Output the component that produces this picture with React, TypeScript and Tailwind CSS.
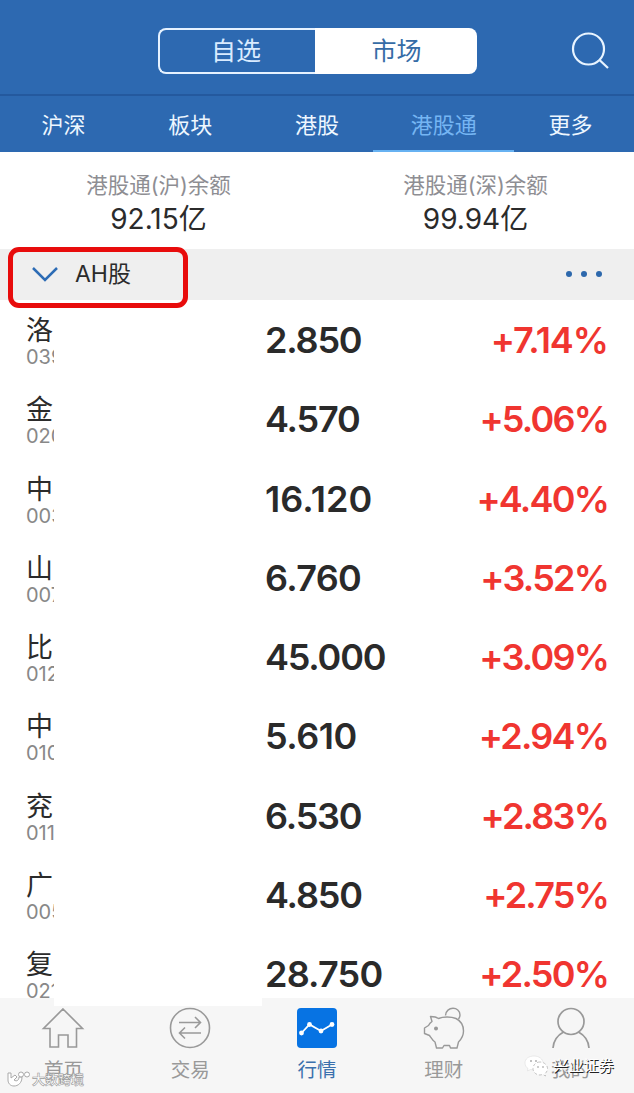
import React from 'react';
import { clsx } from 'clsx';

interface Stock {
  name: string;
  code: string;
  price: string;
  change: string;
  priceClass?: string;
  changeClass?: string;
}

const stocks: Stock[] = [
  { name: '洛', code: '039', price: '2.850', change: '+7.14%', changeClass: 'tracking-[-1px]' },
  { name: '金', code: '020', price: '4.570', change: '+5.06%' },
  { name: '中', code: '003', price: '16.120', change: '+4.40%', priceClass: 'tracking-[0.1px]' },
  { name: '山', code: '007', price: '6.760', change: '+3.52%', priceClass: 'tracking-[-0.7px]' },
  { name: '比', code: '012', price: '45.000', change: '+3.09%' },
  { name: '中', code: '010', price: '5.610', change: '+2.94%', priceClass: 'tracking-[-0.5px]' },
  { name: '兖', code: '011', price: '6.530', change: '+2.83%' },
  { name: '广', code: '005', price: '4.850', change: '+2.75%' },
  { name: '复', code: '021', price: '28.750', change: '+2.50%', priceClass: 'tracking-[-0.8px]' },
];

const tabs = ['沪深', '板块', '港股', '港股通', '更多'];

const balances = [
  { label: '港股通(沪)余额', value: '92.15亿' },
  { label: '港股通(深)余额', value: '99.94亿' },
];

const HomeIcon = () => (
  <svg className="h-11 w-11" viewBox="0 0 44 44" fill="none" stroke="#999" strokeWidth="1.6">
    <path d="M22 3 L41.500 22.500 H35.500 V41 H27 V29 H17.500 V41 H9 V22.500 H2.500 Z" />
  </svg>
);

const TradeIcon = () => (
  <svg className="h-11 w-11" viewBox="0 0 44 44" fill="none" stroke="#999" strokeWidth="1.6">
    <circle cx="22" cy="22" r="19.500" />
    <path d="M11 16.500 H32.500 M27 11 L32.500 16.500 L27 22 M33 27 H11.500 M17 21.500 L11.500 27 L17 32.500" />
  </svg>
);

const MarketIcon = () => (
  <svg className="h-11 w-11" viewBox="0 0 44 44" fill="none">
    <rect x="2" y="2" width="40" height="40" rx="4" fill="#0773e3" />
    <path d="M6.500 27 L14.500 18.500 L26 25 L37 18.500" stroke="#fff" strokeWidth="1.8" />
    <g fill="#fff">
      <circle cx="6.500" cy="27" r="2.400" />
      <circle cx="14.500" cy="18.500" r="2.400" />
      <circle cx="26" cy="25" r="2.400" />
      <circle cx="37" cy="18.500" r="2.400" />
    </g>
  </svg>
);

const PiggyIcon = () => (
  <svg className="h-11 w-11" viewBox="0 0 44 44" fill="none" stroke="#999" strokeWidth="1.400" strokeLinejoin="round">
    <path d="M8.500 10.500 C12 10.500 14.500 11 16.500 12.500 C21 10.500 29 10.500 34 12.500 C39 15 41.500 19.500 41.500 25 C41.500 30 39 33.500 36.500 36 L35 42 H28.500 L27.500 39.500 H22 L20.500 42 H14.500 L13 36 C10.500 34.500 9 31.500 7.500 29.500 L2.500 27.500 V22 L6.500 19.500 C7.500 17.500 8.500 16.500 10 15.500 Z" />
    <path d="M23.500 9.500 C24 0 38 0 38 9 C38 10.500 37.500 11.500 36.500 13" />
    <circle cx="14" cy="22.500" r="1.300" fill="#999" />
  </svg>
);

const UserIcon = () => (
  <svg className="h-11 w-11" viewBox="0 0 44 44" fill="none" stroke="#999" strokeWidth="1.7">
    <circle cx="22" cy="15.500" r="13" />
    <path d="M4 42 C4.500 35 9 29 14.500 26 M29.500 26 C35 29 39.500 35 40 42" />
  </svg>
);

const navItems = [
  { label: '首页', icon: <HomeIcon /> },
  { label: '交易', icon: <TradeIcon /> },
  { label: '行情', icon: <MarketIcon />, active: true },
  { label: '理财', icon: <PiggyIcon /> },
  { label: '我的', icon: <UserIcon /> },
];

const Header = () => (
  <header className="relative flex h-24 shrink-0 justify-center border-b-2 border-[#24599e] pt-7">
    <div className="flex h-[46px] w-[319px] text-[25px] leading-[42px]">
      <span className="w-[157px] rounded-l-lg border-2 border-r-0 border-[#e6f2ff] pr-0.5 text-center text-[#d9ebff]">
        自选
      </span>
      <span className="flex-1 rounded-r-lg bg-white pt-0.5 pl-0.5 text-center text-[#366ca6]">市场</span>
    </div>
    <svg className="absolute top-8 right-6 h-10 w-10" viewBox="0 0 40 40" fill="none" stroke="#e8f4ff" strokeWidth="2.2">
      <circle cx="18.500" cy="17" r="15.500" />
      <path d="M29.500 28 L38 36" />
    </svg>
  </header>
);

const StockRow: React.FC<{ stock: Stock }> = ({ stock }) => (
  <div className="flex h-[79.3px] shrink-0 items-start px-[26px]">
    <div className="w-7 overflow-hidden pt-[17px] whitespace-nowrap">
      <div className="text-[27px] leading-7 text-[#2b2b2b]">{stock.name}</div>
      <div className="text-[20px] leading-[25px] text-[#888]">{stock.code}</div>
    </div>
    <div
      className={clsx(
        'ml-[211px] flex-1 pt-5 text-[36px] leading-10 font-semibold text-[#2a2a2a]',
        stock.priceClass ?? 'tracking-[-1.2px]',
      )}
    >
      {stock.price}
    </div>
    <div
      className={clsx(
        'pt-5 text-[36px] leading-10 font-semibold text-[#f03530]',
        stock.changeClass ?? 'tracking-[-1.8px]',
      )}
    >
      {stock.change}
    </div>
  </div>
);

export default function App() {
  return (
    <div className="relative flex h-[1093px] w-[634px] flex-col overflow-hidden bg-white font-[Inter,'Noto_Sans_CJK_SC',sans-serif]">
      <div className="shrink-0 bg-[#2d69b1]">
        <Header />
        <nav className="grid h-14 grid-cols-5 text-[22px] leading-[58px]">
          {tabs.map((tab) => (
            <span
              key={tab}
              className={clsx(
                'h-14 text-center',
                tab === '港股通' ? 'mx-[-7px] border-b-2 border-[#67b2f2] text-[#75b5f3]' : 'text-[#eef7ff]',
              )}
            >
              {tab}
            </span>
          ))}
        </nav>
      </div>

      <section className="grid h-[97px] shrink-0 grid-cols-2 pt-[19px] text-center">
        {balances.map((item) => (
          <div key={item.label}>
            <div className="text-[21.5px] leading-[29px] text-[#8e8e93]">{item.label}</div>
            <div className="text-[28px] leading-[39px] text-[#2b2b2b]">{item.value}</div>
          </div>
        ))}
      </section>

      <section className="relative flex h-[51px] shrink-0 items-center bg-[#efefef] pr-8 pl-8">
        <svg className="h-4 w-[26px]" viewBox="0 0 26 16" fill="none" stroke="#2d6cb5" strokeWidth="2.500">
          <path d="M1 1 L13 13 L25 1" />
        </svg>
        <span className="ml-[17px] flex-1 text-[23px] text-[#2b2b2b]">AH股</span>
        <div className="flex gap-[9px] pb-0.5">
          <i className="h-1.5 w-1.5 rounded-full bg-[#2d68ac]" />
          <i className="h-1.5 w-1.5 rounded-full bg-[#2d68ac]" />
          <i className="h-1.5 w-1.5 rounded-full bg-[#2d68ac]" />
        </div>
        <div className="absolute top-[-2px] left-2 h-[61px] w-[180px] rounded-[11px] border-[5px] border-[#e80c0c]" />
      </section>

      <main className="flex min-h-0 flex-1 flex-col overflow-hidden">
        {stocks.map((stock) => (
          <StockRow key={stock.code} stock={stock} />
        ))}
      </main>

      <footer className="relative grid h-[95px] shrink-0 grid-cols-5 bg-[#f6f6f6]">
        <div className="absolute top-0 left-[54px] h-2 w-[208px] bg-white" />
        {navItems.map((item) => (
          <div key={item.label} className="relative flex flex-col items-center pt-2">
            {item.icon}
            <span className={clsx('mt-[5px] text-[19.5px] leading-[30px]', item.active ? 'text-[#3b70ad]' : 'text-[#999]')}>
              {item.label}
            </span>
          </div>
        ))}
        <div className="absolute top-[73px] left-[7px] flex items-center gap-px">
          <svg className="h-4 w-6" viewBox="0 0 24 16" fill="#fff" stroke="#aaa" strokeWidth="1">
            <path d="M1 2 H4 V7 L8 4 L10 6 L7 9 C10 11 12 9 12 6 L15 6 C15 12 11 15 7 15 C3 15 1 12 1 9 Z" />
            <circle cx="14" cy="3.500" r="2.500" />
            <circle cx="20" cy="3.500" r="2.500" />
          </svg>
          <span className="text-[13px] leading-4 font-bold text-white [-webkit-text-stroke:0.6px_#999]">大数跨境</span>
        </div>
        <div className="absolute top-[54px] left-[524px] flex items-center gap-[5px]">
          <svg className="h-6 w-6" viewBox="0 0 24 24" fill="#fff">
            <path d="M10 2 C4.500 2 1 5 1 9 C1 11.500 2.500 13.500 4 14.500 L3.500 17 L6.500 15.500 L10 16 C15 16 19 13 19 9 C19 5 15 2 10 2 Z" stroke="#ddd" strokeWidth="0.6" />
            <path d="M16 8 C12 8 9 11 9 14.500 C9 18 12 21 16 21 L19 20.500 L21.500 22 L21 19.500 C22.500 18.500 23.500 16.500 23.500 14.500 C23.500 11 20 8 16 8 Z" stroke="#aaa" strokeWidth="0.700" strokeDasharray="3 2" />
            <g fill="#777">
              <circle cx="7" cy="7" r="0.800" />
              <circle cx="12" cy="7" r="0.800" />
              <circle cx="14" cy="13" r="0.700" />
              <circle cx="19" cy="13" r="0.700" />
            </g>
          </svg>
          <span className="text-[15.2px] leading-7 text-white [text-shadow:1px_1px_0_#222]">兴业证券</span>
        </div>
      </footer>
    </div>
  );
}
